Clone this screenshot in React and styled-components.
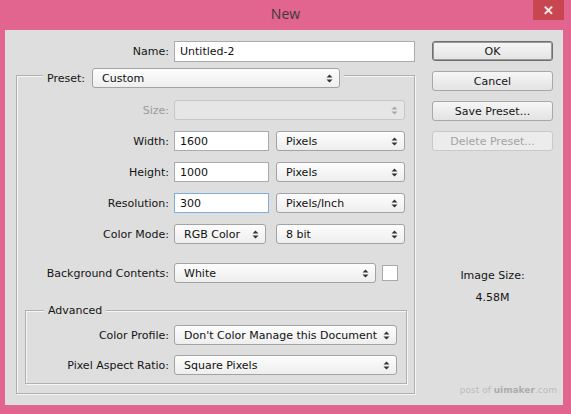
import React from "react";
import styled, { createGlobalStyle } from "styled-components";

const GlobalStyle = createGlobalStyle`
  html, body {
    margin: 0;
    padding: 0;
    background: #e2658f;
  }
  * {
    box-sizing: border-box;
  }
`;

const Window = styled.div`
  width: 571px;
  height: 414px;
  background: #e2658f;
  display: flex;
  flex-direction: column;
  font-family: "DejaVu Sans", Verdana, sans-serif;
  font-size: 11px;
  color: #141414;
  overflow: hidden;
`;

const TitleBar = styled.div`
  height: 30px;
  display: grid;
  grid-template-columns: 1fr auto 1fr;
  align-items: start;
`;

const Title = styled.div`
  grid-column: 2;
  font-family: "Open Sans", "Noto Sans", sans-serif;
  font-size: 14px;
  line-height: 28px;
  color: #3a3a3a;
`;

const CloseButton = styled.div`
  grid-column: 3;
  justify-self: end;
  margin-right: 7px;
  width: 31px;
  height: 20px;
  background: #c8464f;
  color: #f6eaea;
  display: flex;
  align-items: center;
  justify-content: center;
  font-family: "Liberation Sans", Arial, sans-serif;
  font-size: 13px;
  font-weight: bold;
`;

const Body = styled.div`
  position: relative;
  margin: 0 8px 0 5px;
  height: 375px;
  background: #dedede;
  padding: 11px 10px 0 11px;
  display: flex;
  gap: 17px;
`;

const LeftColumn = styled.div`
  width: 399px;
  display: flex;
  flex-direction: column;
`;

const RightColumn = styled.div`
  width: 121px;
  display: flex;
  flex-direction: column;
  gap: 10px;
`;

const Row = styled.div`
  display: grid;
  grid-template-columns: ${({ $labelWidth }) => $labelWidth}px auto;
  column-gap: 5px;
  align-items: center;
  margin-top: ${({ $mt }) => $mt || 0}px;
`;

const Label = styled.div`
  text-align: right;
  white-space: nowrap;
  color: ${({ $disabled }) => ($disabled ? "#9a9a9a" : "#141414")};
`;

const Fields = styled.div`
  display: flex;
  align-items: center;
  gap: ${({ $gap }) => $gap || 7}px;
`;

const TextInput = styled.div`
  width: ${({ $width }) => $width}px;
  height: ${({ $height }) => $height || 20}px;
  background: #ffffff;
  border: 1px solid ${({ $focused }) => ($focused ? "#7eaee0" : "#a9abb1")};
  padding-left: 5px;
  display: flex;
  align-items: center;
  color: #111;
`;

const SelectBox = styled.div`
  width: ${({ $width }) => $width}px;
  height: 20px;
  border: 1px solid ${({ $disabled }) => ($disabled ? "#c6c6c6" : "#a3a3a3")};
  border-radius: 3px;
  background: ${({ $disabled }) =>
    $disabled ? "#e6e6e6" : "linear-gradient(#fdfdfd, #eeeeee)"};
  padding: 0 6px 0 9px;
  display: flex;
  align-items: center;
  justify-content: space-between;
  color: #111;
  white-space: nowrap;
`;

const Swatch = styled.div`
  width: 16px;
  height: 16px;
  background: #ffffff;
  border: 1px solid #a9a9a9;
`;

const GroupBox = styled.div`
  border: 1px solid #b0b0b0;
  box-shadow: inset 1px 1px 0 #f6f6f6, 1px 1px 0 #f6f6f6;
  margin: ${({ $margin }) => $margin};
  padding-bottom: ${({ $pb }) => $pb}px;
  display: flex;
  flex-direction: column;
`;

const Legend = styled.div`
  align-self: flex-start;
  display: flex;
  align-items: center;
  gap: 7px;
  margin: ${({ $margin }) => $margin};
  padding: 0 4px;
  background: #dedede;
  line-height: 13px;
`;

const Button = styled.div`
  height: 20px;
  border: 1px solid
    ${({ $default, $disabled }) =>
      $default ? "#6f6f6f" : $disabled ? "#c9c9c9" : "#a8a8a8"};
  box-shadow: ${({ $default }) => ($default ? "inset 0 0 0 1px #9a9a9a" : "none")};
  border-radius: 3px;
  background: ${({ $disabled }) =>
    $disabled ? "#ececec" : "linear-gradient(#f6f6f6, #e3e3e3)"};
  color: ${({ $disabled }) => ($disabled ? "#a3a3a3" : "#141414")};
  display: flex;
  align-items: center;
  justify-content: center;
`;

const ImageSize = styled.div`
  margin-top: 104px;
  text-align: center;
  line-height: 22px;
`;

const Watermark = styled.div`
  position: absolute;
  right: 6px;
  bottom: 10px;
  font-size: 9px;
  color: #bcbcbc;
  b {
    color: #acacac;
  }
`;

const Arrows = ({ disabled }) => (
  <svg width="7" height="9" viewBox="0 0 7 9">
    <path d="M3.5 0.5 L6.5 3.5 L0.5 3.5 Z M0.5 5.5 L6.5 5.5 L3.5 8.5 Z" fill={disabled ? "#a8a8a8" : "#333"} />
  </svg>
);

const Select = ({ width, value, disabled }) => (
  <SelectBox $width={width} $disabled={disabled}>
    <span>{value}</span>
    <Arrows disabled={disabled} />
  </SelectBox>
);

export default function App() {
  return (
    <>
      <GlobalStyle />
      <Window>
        <TitleBar>
          <Title>New</Title>
          <CloseButton>✕</CloseButton>
        </TitleBar>
        <Body>
          <LeftColumn>
            <Row $labelWidth={153}>
              <Label>Name:</Label>
              <TextInput $width={241} $height={21}>Untitled-2</TextInput>
            </Row>

            <GroupBox $margin="13px 0 0 0" $pb={9}>
              <Legend $margin="-8px 0 0 26px">
                <Label>Preset:</Label>
                <Select width={248} value="Custom" />
              </Legend>

              <Row $labelWidth={152} $mt={12}>
                <Label $disabled>Size:</Label>
                <Select width={231} value="" disabled />
              </Row>
              <Row $labelWidth={152} $mt={11}>
                <Label>Width:</Label>
                <Fields>
                  <TextInput $width={95}>1600</TextInput>
                  <Select width={129} value="Pixels" />
                </Fields>
              </Row>
              <Row $labelWidth={152} $mt={11}>
                <Label>Height:</Label>
                <Fields>
                  <TextInput $width={95}>1000</TextInput>
                  <Select width={129} value="Pixels" />
                </Fields>
              </Row>
              <Row $labelWidth={152} $mt={11}>
                <Label>Resolution:</Label>
                <Fields>
                  <TextInput $width={95} $focused>300</TextInput>
                  <Select width={129} value="Pixels/Inch" />
                </Fields>
              </Row>
              <Row $labelWidth={152} $mt={11}>
                <Label>Color Mode:</Label>
                <Fields $gap={10}>
                  <Select width={92} value="RGB Color" />
                  <Select width={129} value="8 bit" />
                </Fields>
              </Row>
              <Row $labelWidth={152} $mt={19}>
                <Label>Background Contents:</Label>
                <Fields $gap={6}>
                  <Select width={202} value="White" />
                  <Swatch />
                </Fields>
              </Row>

              <GroupBox $margin="27px 7px 0 8px" $pb={8}>
                <Legend $margin="-7px 0 0 18px">Advanced</Legend>
                <Row $labelWidth={143} $mt={8}>
                  <Label>Color Profile:</Label>
                  <Select width={223} value="Don't Color Manage this Document" />
                </Row>
                <Row $labelWidth={143} $mt={10}>
                  <Label>Pixel Aspect Ratio:</Label>
                  <Select width={223} value="Square Pixels" />
                </Row>
              </GroupBox>
            </GroupBox>
          </LeftColumn>

          <RightColumn>
            <Button $default>OK</Button>
            <Button>Cancel</Button>
            <Button>Save Preset...</Button>
            <Button $disabled>Delete Preset...</Button>
            <ImageSize>
              Image Size:
              <br />
              4.58M
            </ImageSize>
          </RightColumn>

          <Watermark>
            post of <b>uimaker</b>.com
          </Watermark>
        </Body>
      </Window>
    </>
  );
}
